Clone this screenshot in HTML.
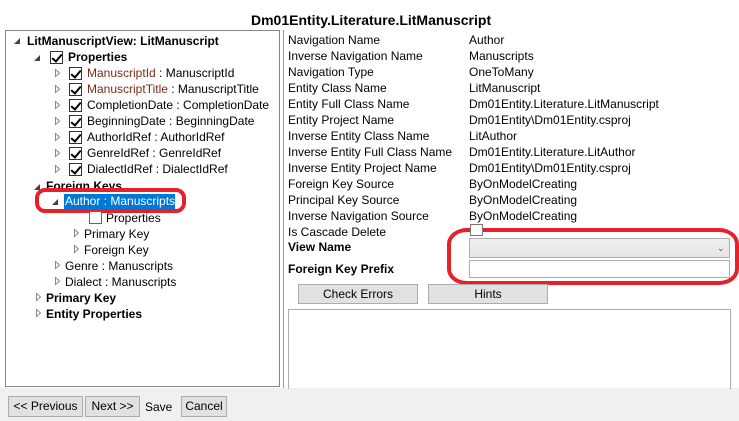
<!DOCTYPE html>
<html><head><style>
body{margin:0;width:739px;height:421px;background:#fff;font-family:"Liberation Sans",sans-serif;font-size:12px;color:#000;position:relative;overflow:hidden}
.a{position:absolute;white-space:nowrap;line-height:16px}
.b{font-weight:bold}
.cb{position:absolute;width:11px;height:11px;border:1px solid #333;background:#fff}
.cb.c::after{content:"";position:absolute;left:3px;top:0px;width:4px;height:8px;border:solid #000;border-width:0 2px 2px 0;transform:rotate(40deg)}
.exp{position:absolute;width:0;height:0;border-left:6px solid transparent;border-bottom:6px solid #444}
.btn{position:absolute;background:#e1e1e1;border:1px solid #adadad;text-align:center;line-height:19px;box-sizing:border-box}
</style></head><body>
<div class="a b" style="left:251px;top:12px;font-size:14px">Dm01Entity.Literature.LitManuscript</div>
<div style="position:absolute;left:5px;top:30px;width:275px;height:357px;border:1px solid #828790;box-sizing:border-box"></div>
<div style="position:absolute;left:0;top:388px;width:739px;height:33px;background:#f0f0f0"></div>
<div style="position:absolute;left:283px;top:30px;width:1px;height:358px;background:#999"></div>

<div class="exp" style="left:14px;top:38px"></div>
<div class="a b" style="left:27px;top:33px">LitManuscriptView: LitManuscript</div>
<div class="exp" style="left:34px;top:55px"></div>
<div class="cb c" style="left:50px;top:51px"></div>
<div class="a b" style="left:68px;top:49px">Properties</div>
<svg style="position:absolute;left:54px;top:68px" width="8" height="110">
<g fill="none" stroke="#888"><path d="M1.5 1.5 L5.5 5 L1.5 8.5Z"/><path d="M1.5 17.5 L5.5 21 L1.5 24.5Z"/><path d="M1.5 33.5 L5.5 37 L1.5 40.5Z"/><path d="M1.5 49.5 L5.5 53 L1.5 56.5Z"/><path d="M1.5 65.5 L5.5 69 L1.5 72.5Z"/><path d="M1.5 81.5 L5.5 85 L1.5 88.5Z"/><path d="M1.5 97.5 L5.5 101 L1.5 104.5Z"/></g></svg>
<div class="cb c" style="left:69px;top:67px"></div><div class="a" style="left:87px;top:65px"><span style="color:#7a2a1a">ManuscriptId</span> : ManuscriptId</div>
<div class="cb c" style="left:69px;top:83px"></div><div class="a" style="left:87px;top:81px"><span style="color:#7a2a1a">ManuscriptTitle</span> : ManuscriptTitle</div>
<div class="cb c" style="left:69px;top:99px"></div><div class="a" style="left:87px;top:97px">CompletionDate : CompletionDate</div>
<div class="cb c" style="left:69px;top:115px"></div><div class="a" style="left:87px;top:113px">BeginningDate : BeginningDate</div>
<div class="cb c" style="left:69px;top:131px"></div><div class="a" style="left:87px;top:129px">AuthorIdRef : AuthorIdRef</div>
<div class="cb c" style="left:69px;top:147px"></div><div class="a" style="left:87px;top:145px">GenreIdRef : GenreIdRef</div>
<div class="cb c" style="left:69px;top:163px"></div><div class="a" style="left:87px;top:161px">DialectIdRef : DialectIdRef</div>
<div class="exp" style="left:34px;top:184px"></div>
<div class="a b" style="left:46px;top:178px">Foreign Keys</div>
<div style="position:absolute;left:35px;top:188px;width:151px;height:25px;border:4px solid #e8202a;border-radius:10px;background:#fff;box-sizing:border-box"></div>
<div class="exp" style="left:52px;top:199px"></div>
<div style="position:absolute;left:64px;top:194px;width:111px;height:15px;background:#0078d7"></div>
<div class="a" style="left:65px;top:193px;color:#fff">Author : Manuscripts</div>
<div class="cb" style="left:89px;top:211px;border-color:#666"></div>
<div class="a" style="left:106px;top:210px">Properties</div>
<svg style="position:absolute;left:73px;top:228px" width="8" height="70">
<g fill="none" stroke="#888"><path d="M1.5 1.5 L5.5 5 L1.5 8.5Z"/><path d="M1.5 17.5 L5.5 21 L1.5 24.5Z"/></g></svg>
<div class="a" style="left:84px;top:226px">Primary Key</div>
<div class="a" style="left:84px;top:242px">Foreign Key</div>
<svg style="position:absolute;left:54px;top:260px" width="8" height="30">
<g fill="none" stroke="#888"><path d="M1.5 1.5 L5.5 5 L1.5 8.5Z"/><path d="M1.5 17.5 L5.5 21 L1.5 24.5Z"/></g></svg>
<div class="a" style="left:65px;top:258px">Genre : Manuscripts</div>
<div class="a" style="left:65px;top:274px">Dialect : Manuscripts</div>
<svg style="position:absolute;left:35px;top:292px" width="8" height="30">
<g fill="none" stroke="#888"><path d="M1.5 1.5 L5.5 5 L1.5 8.5Z"/><path d="M1.5 17.5 L5.5 21 L1.5 24.5Z"/></g></svg>
<div class="a b" style="left:46px;top:290px">Primary Key</div>
<div class="a b" style="left:46px;top:306px">Entity Properties</div>

<div class="a" style="left:288px;top:32px;line-height:16px">Navigation Name<br>Inverse Navigation Name<br>Navigation Type<br>Entity Class Name<br>Entity Full Class Name<br>Entity Project Name<br>Inverse Entity Class Name<br>Inverse Entity Full Class Name<br>Inverse Entity Project Name<br>Foreign Key Source<br>Principal Key Source<br>Inverse Navigation Source<br>Is Cascade Delete</div>
<div class="a" style="left:469px;top:32px;line-height:16px">Author<br>Manuscripts<br>OneToMany<br>LitManuscript<br>Dm01Entity.Literature.LitManuscript<br>Dm01Entity\Dm01Entity.csproj<br>LitAuthor<br>Dm01Entity.Literature.LitAuthor<br>Dm01Entity\Dm01Entity.csproj<br>ByOnModelCreating<br>ByOnModelCreating<br>ByOnModelCreating</div>
<div class="a b" style="left:288px;top:239px">View Name</div>
<div class="a b" style="left:288px;top:261px">Foreign Key Prefix</div>
<div style="position:absolute;left:447px;top:228px;width:292px;height:57px;border:4px solid #e8202a;border-radius:20px/16px;box-sizing:border-box"></div>
<div class="cb" style="left:470px;top:224px;height:10px;border-color:#777"></div>
<div style="position:absolute;left:469px;top:238px;width:261px;height:20px;border:1px solid #acacac;background:linear-gradient(#f0f0f0,#e5e5e5);box-sizing:border-box"></div>
<div class="a" style="left:717px;top:240px;font-size:9px;color:#555">⌄</div>
<div style="position:absolute;left:469px;top:260px;width:261px;height:18px;border:1px solid #acacac;background:#fff;box-sizing:border-box"></div>
<div class="btn" style="left:298px;top:284px;width:120px;height:20px">Check Errors</div>
<div class="btn" style="left:428px;top:284px;width:120px;height:20px">Hints</div>
<div style="position:absolute;left:288px;top:309px;width:443px;height:80px;border:1px solid #acacac;box-sizing:border-box;border-bottom:none"></div>

<div class="btn" style="left:8px;top:396px;width:75px;height:21px;font-size:12px">&lt;&lt; Previous</div>
<div class="btn" style="left:85px;top:396px;width:55px;height:21px">Next &gt;&gt;</div>
<div class="a" style="left:145px;top:399px">Save</div>
<div class="btn" style="left:181px;top:396px;width:46px;height:21px">Cancel</div>
</body></html>
